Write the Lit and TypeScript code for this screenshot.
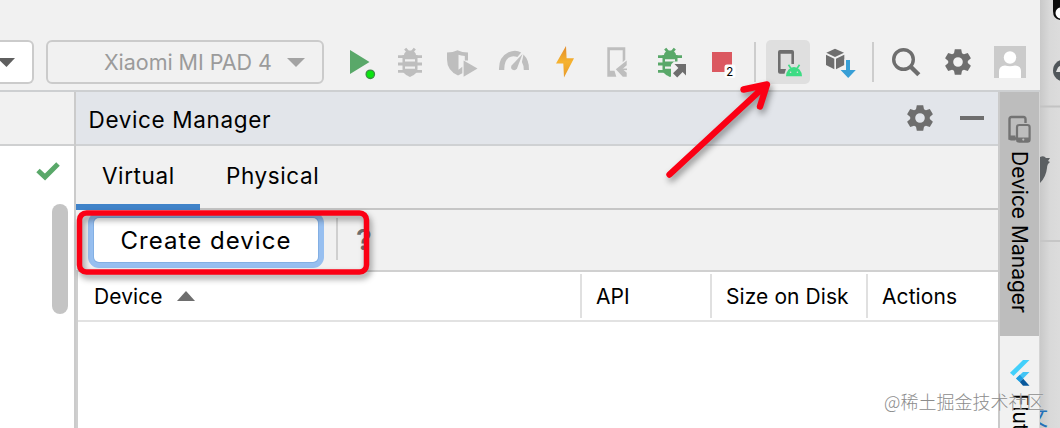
import { css, html, LitElement, svg } from "lit";
import { customElement, property } from "lit/decorators.js";

const bugShape = svg`
  <path d="M17.2 8.600l3.400 4M26.800 8.600l-3.400 4M10 16.600h24M10 24h24M10 31.400h24"
    fill="none" stroke="currentColor" stroke-width="2.800" />
  <path d="M16 15a6 4.600 0 0 1 12 0h1.500v14c0 5-5 6.500-7.500 8c-2.500-1.500-7.500-3-7.500-8v-14z" fill="currentColor" />
  <path d="M17 20.400h10M17 27.600h10" stroke="#f1f1f1" stroke-width="2.200" />
`;

const gearShape = svg`
  <path fill="currentColor" fill-rule="evenodd" d="M18.800 9.200h6.400l.8 4 1.900 1.100 3.900-1.400 3.100 5.400-3.100 2.700v2l3.100 2.700-3.100 5.400-3.900-1.400-1.900 1.100-.8 4h-6.400l-.8-4-1.900-1.100-3.900 1.400-3.100-5.400 3.100-2.700v-2l-3.100-2.700 3.100-5.400 3.900 1.400 1.900-1.100zM22 17.200a4.800 4.800 0 1 0 0 9.600a4.800 4.800 0 1 0 0-9.600z" />
`;

const shapes = {
    run: svg`
      <path d="M14 10L33.500 22L14 34z" fill="#59a869" />
      <circle cx="34.300" cy="34.300" r="4.200" fill="#0be510" stroke="#3c8f45" stroke-width="1.300" />
    `,
    bug: bugShape,
    coverage: svg`
      <path fill="currentColor" fill-rule="evenodd" d="M7 12.500q6 0 10.500-2.300q4.500 2.300 10.500 2.300v8h-3.200v-4.500q-4-.2-6.300-1.200v15l3.800-3v6.500l-4.300 2.200q-11-5-11-16z" />
      <path d="M23.600 20.500L37.500 28.600L23.600 36.800z" fill="currentColor" />
    `,
    gauge: svg`
      <path d="M7 30q-.5-13 9.500-17.700q7-3.200 12.700.2l-3.800 4.500q-5-2-8.900.8q-4.500 3.600-4.200 12.200z" fill="currentColor" />
      <path d="M31.500 14.600q6 6 5.500 15.400h-5.200q0-4.800-1.900-8z" fill="currentColor" />
      <path d="M30.500 14L25 28.500q-1.800 2.700-4.400 1.300q-2.400-1.800-1-4.400z" fill="currentColor" />
    `,
    bolt: svg`
      <defs>
        <linearGradient id="bolt" x1="0" y1="0" x2="0" y2="1">
          <stop offset="0" stop-color="#e08a2c" />
          <stop offset="0.500" stop-color="#f6b32f" />
          <stop offset="1" stop-color="#e79a2c" />
        </linearGradient>
      </defs>
      <path d="M22 6L12 23.600H19.300L20 37.600L30 18.200H22.600z" fill="url(#bolt)" />
    `,
    phone: svg`
      <path fill="currentColor" fill-rule="evenodd" d="M11.300 7.300h18v12.500l-2.600 2.400v-11.900h-12.800v20.500h4.600l1.800 5.900h-9z" />
      <path d="M30.700 20.500V25.200L26.500 29L30.700 32.800V36.800L26.800 36.800L19.800 29.300z" fill="currentColor" />
      <path d="M24.800 29.300H31" stroke="currentColor" stroke-width="1.600" />
    `,
    attach: svg`
      <g color="#59a869">${bugShape}</g>
      <path d="M23 40V24.500L26 21.500H40V40z" fill="#f1f1f1" />
      <path d="M26.500 24H38V35.500L34.600 32.100L29.200 37.500L25 33.300L30.400 27.900z" fill="#6e6e6e" />
    `,
    stop: svg`
      <rect x="12" y="12" width="20" height="20" fill="#db5860" />
      <rect x="24.500" y="24.500" width="11" height="13.500" rx="2.500" fill="#fdfdfd" />
      <text x="29.800" y="35.600" text-anchor="middle" font-size="11.500" fill="#000">2</text>
    `,
    devices: svg`
      <path fill="#6e6e6e" fill-rule="evenodd" d="M14 10h12q2 0 2 2v12h-2.600v-10.300h-10.800v15.300h5.400l-1.500 4.700h-4.500q-2 0-2-2v-19.700q0-2 2-2z" />
      <path d="M20 36.200a8 9.200 0 0 1 16 0z" fill="#3ddc84" />
      <path d="M22.500 24.800l2.300 3.500M33.500 24.800l-2.300 3.500" stroke="#3ddc84" stroke-width="1.600" />
      <circle cx="24.600" cy="32.300" r=".8" fill="#dfdfdf" /><circle cx="31.400" cy="32.300" r=".8" fill="#dfdfdf" />
    `,
    sdk: svg`
      <path d="M17 8.700L26 12.700L17 16.900L8.300 12.700z" fill="#6e6e6e" />
      <path d="M8 14.700L16.300 18.700V29.300L8 25z" fill="#6e6e6e" />
      <path d="M26.300 14.700L18 18.700V29.300L26.300 25z" fill="#6e6e6e" />
      <path d="M26.500 19H33.500V29H26.500z" fill="#f1f1f1" />
      <path d="M28 20H32V30H37.800L30.200 38L22.600 30H28z" fill="#389fd6" />
    `,
    search: svg`
      <circle cx="19.500" cy="19.500" r="9.800" fill="none" stroke="#6e6e6e" stroke-width="3.400" />
      <path d="M26.500 26.500L34.800 34.800" stroke="#6e6e6e" stroke-width="4.400" />
    `,
    gear: gearShape,
    avatar: svg`
      <rect x="6" y="6" width="32" height="32" fill="#cbcbcb" />
      <circle cx="22" cy="17.500" r="6.200" fill="#fff" />
      <path d="M11 38V31q0-5 6-5.600q5 1.600 10 0q6 .6 6 5.600v7z" fill="#fff" />
    `,
};

type ShapeName = keyof typeof shapes;

@customElement("tool-icon")
export class ToolIconElement extends LitElement {
    @property()
    name: ShapeName = "run";

    render() {
        return html`<svg width="44" height="44" viewBox="0 0 44 44">${shapes[this.name]}</svg>`;
    }

    static styles = css`
      :host {
        display: block;
        width: 44px;
        height: 44px;
        flex: none;
        color: #bebebe;
      }

      :host([active]) {
        border-radius: 5px;
        background: #dfdfdf;
      }

      :host([dark]) {
        color: #6e6e6e;
      }

      svg {
        display: block;
      }
    `;
}

@customElement("main-toolbar")
export class MainToolbarElement extends LitElement {
    render() {
        return html`
      <div class="combo config">
        <svg width="15" height="9" viewBox="0 0 15 9"><path d="M-3 0H15L6.500 9z" fill="#5f5f5f" /></svg>
      </div>
      <div class="combo target">
        <span>Xiaomi MI PAD 4</span>
        <svg width="18" height="9" viewBox="0 0 18 9"><path d="M0 0H18L9 9z" fill="#a3a3a3" /></svg>
      </div>
      <div class="icons">
        <tool-icon name="run"></tool-icon>
        <tool-icon name="bug"></tool-icon>
        <tool-icon name="coverage"></tool-icon>
        <tool-icon name="gauge"></tool-icon>
        <tool-icon name="bolt"></tool-icon>
        <tool-icon name="phone"></tool-icon>
        <tool-icon name="attach"></tool-icon>
        <tool-icon name="stop"></tool-icon>
      </div>
      <div class="separator"></div>
      <div class="icons">
        <tool-icon name="devices" active></tool-icon>
        <tool-icon name="sdk"></tool-icon>
      </div>
      <div class="separator"></div>
      <div class="icons">
        <tool-icon name="search"></tool-icon>
        <tool-icon name="gear" dark></tool-icon>
        <tool-icon name="avatar"></tool-icon>
      </div>
    `;
    }

    static styles = css`
      :host {
        display: flex;
        box-sizing: border-box;
        height: 92px;
        padding-top: 40px;
        align-items: flex-start;
        background: #f1f1f1;
        border-bottom: 2px solid #cdcfd1;
      }

      .combo {
        display: flex;
        box-sizing: border-box;
        height: 44px;
        align-items: center;
        border: 2px solid #cbcbcb;
        border-radius: 6px;
        flex: none;
      }

      .config {
        width: 34px;
        border-left: 0;
        border-radius: 0 6px 6px 0;
        background: #fff;
      }

      .target {
        width: 278px;
        margin: 0 12px;
        padding: 0 17px 0 56px;
        justify-content: space-between;
        color: #9b9b9b;
        font-size: 21.500px;
        letter-spacing: -0.050px;
        white-space: nowrap;
      }

      .icons {
        display: flex;
        gap: 8px;
      }

      .separator {
        width: 2px;
        height: 40px;
        margin: 2px 10px 0;
        background: #cdcdcd;
        flex: none;
      }
    `;
}

@customElement("device-panel")
export class DevicePanelElement extends LitElement {
    render() {
        return html`
      <header>
        <span class="title">Device Manager</span>
        <tool-icon name="gear" dark></tool-icon>
        <div class="minimize"></div>
      </header>
      <nav>
        <div class="tab selected">Virtual</div>
        <div class="tab">Physical</div>
      </nav>
      <div class="actions">
        <button>Create device</button>
        <div class="line"></div>
        <span class="help">?</span>
      </div>
      <div class="columns">
        <div class="column">
          Device
          <svg width="18" height="10" viewBox="0 0 18 10"><path d="M0 10L9 0L18 10z" fill="#6e6e6e" /></svg>
        </div>
        <div class="column">API</div>
        <div class="column">Size on Disk</div>
        <div class="column last">Actions</div>
      </div>
      <div class="rows"></div>
    `;
    }

    static styles = css`
      :host {
        display: flex;
        flex-direction: column;
        flex: 1;
        color: #000;
        white-space: nowrap;
      }

      header {
        display: flex;
        box-sizing: border-box;
        height: 54px;
        padding: 0 14px 0 12.500px;
        align-items: center;
        background: #e2e5ea;
        border-bottom: 2px solid #cfd1d3;
      }

      .title {
        flex: 1;
        padding-top: 2px;
        font-size: 22.500px;
        letter-spacing: 0.650px;
      }

      .minimize {
        width: 24px;
        height: 4px;
        margin-left: 18px;
        background: #6e6e6e;
      }

      nav {
        display: flex;
        box-sizing: border-box;
        height: 64px;
        background: #f1f1f1;
        border-bottom: 2px solid #c6c6c6;
        font-size: 22.500px;
        letter-spacing: 0.600px;
      }

      .tab {
        display: flex;
        box-sizing: border-box;
        height: 64px;
        padding: 0 26px 6px;
        align-items: center;
      }

      .selected {
        width: 124px;
        box-shadow: inset 0 -6px #4083c9;
      }

      .actions {
        display: flex;
        box-sizing: border-box;
        height: 62px;
        padding: 8px 0 0 18px;
        background: #f1f1f1;
        border-bottom: 2px solid #d0d0d0;
      }

      button {
        width: 224px;
        height: 44px;
        margin: 0;
        padding: 1px 0 0;
        border: 0;
        border-radius: 5px;
        background: #fff;
        color: #000;
        font: inherit;
        font-size: 24px;
        letter-spacing: 1.050px;
        box-shadow: 0 0 0 1px #83afe3, 0 0 0 6px #97bff0;
      }

      .line {
        width: 2px;
        height: 42px;
        margin-left: 18px;
        background: #cfcfcf;
      }

      .help {
        margin: 5px 0 0 18px;
        color: #6e6e6e;
        font-size: 29px;
        font-weight: 600;
        line-height: 34px;
      }

      .columns {
        display: grid;
        box-sizing: border-box;
        grid-template-columns: 504px 130px 156px 1fr;
        height: 50px;
        padding: 2px 0;
        margin-left: 2px;
        background: #fff;
        border-bottom: 2px solid #e2e2e2;
        font-size: 21px;
        letter-spacing: 0.080px;
      }

      .column {
        display: flex;
        box-sizing: border-box;
        padding-left: 14px;
        align-items: center;
        gap: 14.500px;
        border-right: 2px solid #e0e0e0;
      }

      .column:first-child {
        padding-left: 16px;
      }

      .last {
        border-right: 0;
      }

      .rows {
        flex: 1;
        margin-left: 2px;
        background: #fff;
      }
    `;
}

@customElement("side-stripe")
export class SideStripeElement extends LitElement {
    render() {
        return html`
      <div class="item open">
        <svg width="24" height="28" viewBox="0 0 24 28">
          <path d="M18.500 8V4q0-2-2-2H4.500q-2 0-2 2V23.500H9" fill="none" stroke="#737373" stroke-width="2.400" />
          <path d="M2 20.500H8.500V25.500H4q-2 0-2-2z" fill="#737373" />
          <rect x="10" y="10" width="12.600" height="16.600" rx="2.200" fill="none" stroke="#737373" stroke-width="2.200" />
          <path d="M10 22.500H22.600V26.500H10z" fill="#737373" />
          <circle cx="16.300" cy="24.600" r="1.100" fill="#bdbdbd" />
        </svg>
        <span class="name">Device Manager</span>
      </div>
      <div class="item">
        <svg width="20" height="26" viewBox="0 0 20 26">
          <path d="M13 0H19.500L3.500 16L0 12.800z" fill="#43d0fb" />
          <path d="M13 12H19.500L9.800 22L6 18.500z" fill="#43c4f5" />
          <path d="M6 18.500L9.800 14.800L13.200 18.500L9.800 22z" fill="#1f9ce0" />
          <path d="M9.800 22L13.200 18.700L19.500 25.700H13z" fill="#08589c" />
        </svg>
        <span class="name">Flutter</span>
      </div>
    `;
    }

    static styles = css`
      :host {
        display: flex;
        box-sizing: border-box;
        width: 42px;
        flex-direction: column;
        overflow: hidden;
        background: #f1f1f1;
        border-left: 2px solid #cacaca;
        border-right: 1px solid #d5d5d5;
      }

      .item {
        display: flex;
        flex-direction: column;
        align-items: center;
        padding-top: 24px;
        flex: none;
      }

      .open {
        box-sizing: border-box;
        height: 244px;
        margin: 0 -1px 0 -2px;
        padding: 23px 2px 0 0;
        border-left: 2px solid #acacac;
        border-right: 1px solid #a9a9a9;
        background: #bdbdbd;
      }

      svg {
        display: block;
      }

      .name {
        margin-top: 8px;
        color: #000;
        font-size: 21px;
        line-height: 26px;
        white-space: nowrap;
        writing-mode: vertical-rl;
      }
    `;
}

@customElement("app-root")
export class AppRootElement extends LitElement {
    render() {
        return html`
      <div class="window">
        <main-toolbar></main-toolbar>
        <div class="body">
          <div class="editor">
            <div class="editor-head"></div>
            <svg class="check" width="24" height="20" viewBox="0 0 24 20">
              <path d="M2 9.500L9 16L22 3" fill="none" stroke="#59a869" stroke-width="5" />
            </svg>
            <div class="thumb"></div>
          </div>
          <device-panel></device-panel>
          <side-stripe></side-stripe>
        </div>
      </div>
      <svg class="behind" width="20" height="428" viewBox="0 0 20 428">
        <path d="M0 106.500H20" stroke="#c3c3c3" stroke-width="2" />
        <path d="M0 241H20" stroke="#c6c6c6" stroke-width="2" />
        <path d="M13 0H20V20Q13 19 13 11z" fill="#0a0a0a" />
        <circle cx="21" cy="13" r="5.500" fill="#fff" />
        <circle cx="24" cy="70.500" r="11" fill="#50565a" />
        <path d="M16 72Q18 66 20 66V72z" fill="#e4e4e4" />
        <path d="M0 157Q4 155 6 158L10 158L8 161L10 162Q7 164 7 168Q6 177 0 183z" fill="#5b5f62" />
        <text class="link" x="-14" y="425">文</text>
      </svg>
      <svg class="marks" width="1060" height="428" viewBox="0 0 1060 428">
        <g class="red">
          <rect x="79.500" y="213" width="287" height="59" rx="7" stroke-width="5.500" />
          <path d="M669.500 174.500L765 86M743.500 89.500L767 84.500L760 106.500" stroke-width="6.400" />
        </g>
      </svg>
      <div class="watermark">@稀土掘金技术社区</div>
    `;
    }

    static styles = css`
      :host {
        display: flex;
        position: relative;
        width: 1060px;
        height: 428px;
        overflow: hidden;
        background: #d9d9d9;
        font-family: Inter, "Liberation Sans", "Noto Sans CJK SC", sans-serif;
      }

      .window {
        display: flex;
        width: 1040px;
        flex: none;
        flex-direction: column;
      }

      .body {
        display: flex;
        flex: 1;
        min-height: 0;
      }

      .editor {
        display: flex;
        box-sizing: border-box;
        width: 76px;
        flex-direction: column;
        background: #fff;
        border-right: 2px solid #cbcbcb;
        align-items: flex-end;
      }

      .editor-head {
        box-sizing: border-box;
        width: 100%;
        height: 54px;
        background: #f1f1f1;
        border-bottom: 2px solid #cfd0d1;
      }

      .check {
        margin: 15px 14px 0 0;
      }

      .thumb {
        width: 16px;
        height: 110px;
        margin: 23px 6px 0 0;
        border-radius: 8px;
        background: #c4c4c4;
      }

      device-panel {
        background: #cfcfcf;
      }

      .behind {
        display: block;
        background: linear-gradient(90deg, #c9c9c9, #d9d9d9 50%, #dcdcdc);
        overflow: hidden;
      }

      .link {
        fill: #2470b8;
        font: 22px "Noto Sans CJK SC", sans-serif;
      }

      .marks {
        position: absolute;
        inset: 0;
      }

      .red {
        fill: none;
        stroke: #fb0014;
        stroke-linecap: round;
        stroke-linejoin: round;
        filter: drop-shadow(2px 4px 3px rgba(0, 0, 0, 0.400));
      }

      .watermark {
        position: absolute;
        left: 884px;
        top: 388px;
        color: #8c8c8c;
        font: 18px/26px "Noto Sans CJK SC", sans-serif;
        font-weight: 300;
        text-shadow: 0 0 1px #fff;
        white-space: nowrap;
      }
    `;
}
